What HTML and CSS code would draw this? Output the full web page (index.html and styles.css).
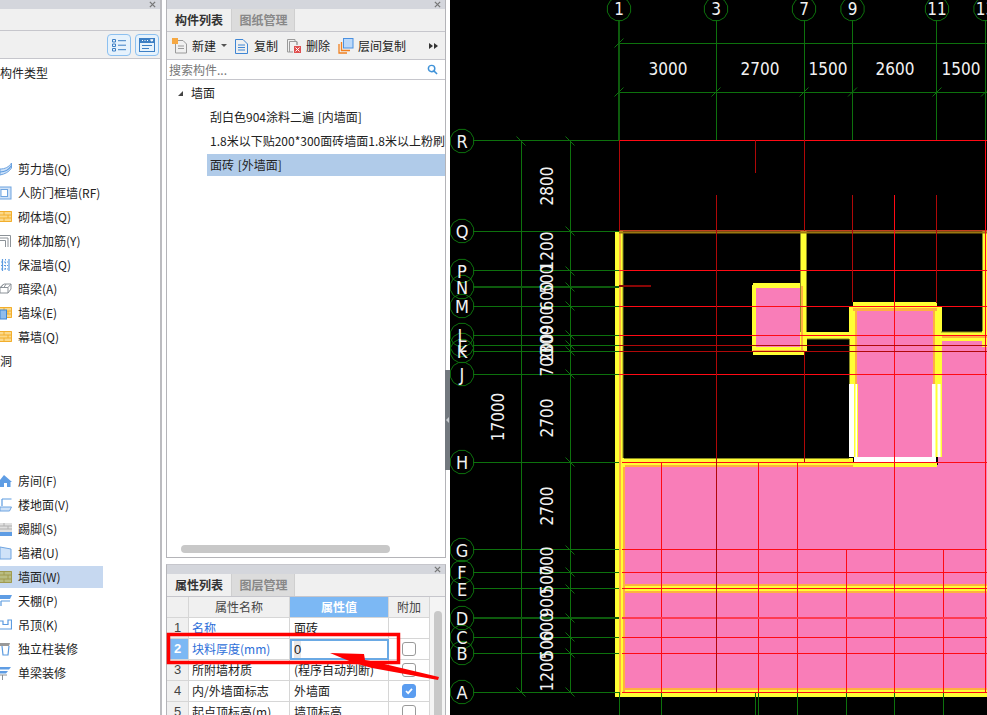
FILE: index.html
```html
<!DOCTYPE html>
<html lang="zh">
<head>
<meta charset="utf-8">
<title>墙面</title>
<link rel="stylesheet" href="styles.css">
</head>
<body>
<svg class="defs" width="0" height="0" aria-hidden="true">
  <defs>
    <g id="brick">
      <rect x="0" y="1" width="12" height="11" class="b-fill"/>
      <path d="M0 1.500H11.500V11.500H0M0 5H11.500M0 8H11.500M4 1.500V5M8 5V8M4 8V11.500" class="b-line"/>
    </g>
    <polygon id="bub" points="11.6,3.1 8.5,8.5 3.1,11.6 -3.1,11.6 -8.5,8.5 -11.6,3.1 -11.6,-3.1 -8.5,-8.5 -3.1,-11.6 3.1,-11.6 8.5,-8.5 11.6,-3.1"/>
  </defs>
</svg>
<div class="app">
  <aside class="left">
    <div class="titlebar"><svg class="close" viewBox="0 0 8 8"><path d="M1 1L7 7M7 1L1 7"/></svg></div>
    <div class="left-bar"></div>
    <div class="left-tools">
      <button class="view-btn"><svg viewBox="0 0 16 14"><path class="ib" d="M1.500 1.500h3v2.500h-3zM1.500 6h3v2.500h-3zM1.500 10.500h3v2.500h-3zM7 2.700h8M7 7.200h8M7 11.700h8"/></svg></button>
      <button class="view-btn"><svg viewBox="0 0 16 14"><rect class="ib" x="0.5" y="0.5" width="15" height="13"/><rect class="if" x="0.5" y="0.5" width="15" height="4"/><path class="ib" d="M3 7.500h10M3 10.500h7"/><path class="iw" d="M3 2.500h1M5.500 2.500h1M8 2.500h1M11.500 1.800h2.500l-1.200 1.500z"/></svg></button>
    </div>
    <div class="tree">
      <div class="row"><span>构件类型</span></div>
      <div class="tree-gap-a"></div>
      <div class="row"><svg class="ic" viewBox="0 0 12 14"><path class="ic-l" d="M0 7C5 7 9 5 11.500 1V6C9 10 5 12 0 13Z"/><path class="ic-s" d="M0 10C5 10 9 7.500 11.500 3.500"/></svg><span>剪力墙(Q)</span></div>
      <div class="row"><svg class="ic" viewBox="0 0 12 14"><rect class="ic-l" x="-2" y="1" width="13" height="12"/><rect class="ic-w" x="1" y="3.500" width="6.500" height="7"/></svg><span>人防门框墙(RF)</span></div>
      <div class="row"><svg class="ic" viewBox="0 0 12 14"><use href="#brick"/></svg><span>砌体墙(Q)</span></div>
      <div class="row"><svg class="ic" viewBox="0 0 12 14"><path class="ic-g" d="M0 1.500H10.500V13M0 4H8V13M0 6.500H5.500V13"/></svg><span>砌体加筋(Y)</span></div>
      <div class="row"><svg class="ic" viewBox="0 0 12 14"><path class="ic-s" d="M2.500 1V13M9 1V13"/><path class="ic-d" d="M5.500 1V13M1 4H8M1 7.500H8M1 11H8"/></svg><span>保温墙(Q)</span></div>
      <div class="row"><svg class="ic" viewBox="0 0 12 14"><path class="ic-g" d="M0 5.500L4 2H11V7L8 11H0ZM0 5.500H8V11M8 5.500L11 2M3 2.500L1 5.500M6 2L4 5.500"/></svg><span>暗梁(A)</span></div>
      <div class="row"><svg class="ic" viewBox="0 0 12 14"><use href="#brick"/><rect class="ic-l2" x="0" y="4" width="6.500" height="9"/></svg><span>墙垛(E)</span></div>
      <div class="row"><svg class="ic" viewBox="0 0 12 14"><use href="#brick"/></svg><span>幕墙(Q)</span></div>
      <div class="row row-nk"><span>洞</span></div>
      <div class="tree-gap-b"></div>
      <div class="row"><svg class="ic" viewBox="0 0 12 14"><path class="ic-h" d="M0 6L4 1L12 8H10.500V13H7V9H4V13H0Z"/></svg><span>房间(F)</span></div>
      <div class="row"><svg class="ic" viewBox="0 0 12 14"><path class="ic-s" d="M2 1H11.500M2 1V8"/><path class="ic-l" d="M0 9H11.500L9.500 13H0Z"/></svg><span>楼地面(V)</span></div>
      <div class="row"><svg class="ic" viewBox="0 0 12 14"><rect class="gb" x="0" y="1" width="12" height="9"/><path class="gl" d="M0 4H12M0 7H12M4 1V4M8 4V7"/><rect class="ic-h" x="0" y="10" width="12" height="4"/></svg><span>踢脚(S)</span></div>
      <div class="row"><svg class="ic" viewBox="0 0 12 14"><path class="ic-l" d="M0 1L11 3V13H0Z"/></svg><span>墙裙(U)</span></div>
      <div class="row sel"><svg class="ic" viewBox="0 0 12 14"><rect x="0" y="1" width="12" height="12" class="o-fill"/><path d="M0 1.500H11.500V12.500H0M0 5H11.500M0 9H11.500M4 1.500V5M8 5V9M4 9V12.500" class="o-line"/></svg><span>墙面(W)</span></div>
      <div class="row"><svg class="ic" viewBox="0 0 12 14"><path class="ic-h" d="M0 1H12L10 5H0Z"/><path class="ic-s" d="M1 7H10M1 7V12"/></svg><span>天棚(P)</span></div>
      <div class="row"><svg class="ic" viewBox="0 0 12 14"><path class="ic-s" d="M0 3H3V6.500H8V2H11.500V11H0"/></svg><span>吊顶(K)</span></div>
      <div class="row"><svg class="ic" viewBox="0 0 12 14"><path class="gb2" d="M0 1H10L9 4H0Z"/><path class="ic-s" d="M2 4L3 13H8L9 4"/></svg><span>独立柱装修</span></div>
      <div class="row"><svg class="ic" viewBox="0 0 12 14"><path class="ic-h" d="M0 1H11L9 3.500H0ZM0 5H8L6 7.500H0Z"/><path class="ic-g" d="M0 9H7M2.500 9V14"/></svg><span>单梁装修</span></div>
    </div>
  </aside>

  <section class="mid">
    <div class="panel list-panel">
      <div class="titlebar"><svg class="close" viewBox="0 0 8 8"><path d="M1 1L7 7M7 1L1 7"/></svg></div>
      <div class="tabs">
        <div class="tab on">构件列表</div>
        <div class="tab">图纸管理</div>
      </div>
      <div class="toolbar">
        <svg class="tool t-new" viewBox="0 0 16 16"><path class="d" d="M3.500 2.500H11L14.500 6V15H3.500Z"/><path class="d" d="M6 8H12M6 10.500H12"/><rect class="star" x="0" y="0" width="6" height="6"/></svg>
        <span class="t-label">新建</span>
        <i class="caret"></i>
        <svg class="tool t-copy" viewBox="0 0 16 16"><path class="b" d="M1.500 1.500H9L13.500 6V15.500H1.500Z"/><path class="b" d="M4 7H11M4 9.500H11M4 12H11"/></svg>
        <span class="t-label">复制</span>
        <svg class="tool t-del" viewBox="0 0 16 16"><path class="g" d="M1.500 1.500H9V4M11 4V7M1.500 1.500V14H7M3.500 3.500H11V7M3.500 3.500V14"/><rect class="x" x="8" y="8" width="7" height="7"/><path class="xw" d="M9.500 9.500L13.500 13.500M13.500 9.500L9.500 13.500"/></svg>
        <span class="t-label">删除</span>
        <svg class="tool t-floor" viewBox="0 0 16 16"><path class="or" d="M1 6V15H9M3.500 4V12.500H12"/><rect class="bl" x="5.500" y="0.500" width="9.500" height="9.500"/></svg>
        <span class="t-label">层间复制</span>
        <span class="more"><i></i><i></i></span>
      </div>
      <div class="search">
        <span>搜索构件...</span>
        <svg viewBox="0 0 12 12"><circle cx="5" cy="5" r="3.500"/><path d="M7.500 7.500L11 11"/></svg>
      </div>
      <div class="items">
        <div class="item-root"><i class="tri"></i><span>墙面</span></div>
        <div class="item">刮白色904涂料二遍 [内墙面]</div>
        <div class="item">1.8米以下贴200*300面砖墙面1.8米以上粉刷白色涂料</div>
        <div class="item active">面砖 [外墙面]</div>
      </div>
      <div class="hscroll"><div class="hthumb"></div></div>
    </div>

    <div class="panel prop-panel">
      <div class="titlebar"><svg class="close" viewBox="0 0 8 8"><path d="M1 1L7 7M7 1L1 7"/></svg></div>
      <div class="tabs">
        <div class="tab on">属性列表</div>
        <div class="tab">图层管理</div>
      </div>
      <div class="grid-wrap">
        <div class="grid">
          <div class="gr head"><div class="c n"></div><div class="c name">属性名称</div><div class="c val hl">属性值</div><div class="c add">附加</div></div>
          <div class="gr"><div class="c n">1</div><div class="c name link">名称</div><div class="c val">面砖</div><div class="c add"></div></div>
          <div class="gr"><div class="c n hl">2</div><div class="c name link">块料厚度(mm)</div><div class="c val edit"><span class="caretbox">0</span></div><div class="c add"><i class="cb"></i></div></div>
          <div class="gr"><div class="c n">3</div><div class="c name">所附墙材质</div><div class="c val">(程序自动判断)</div><div class="c add"><i class="cb"></i></div></div>
          <div class="gr"><div class="c n">4</div><div class="c name">内/外墙面标志</div><div class="c val">外墙面</div><div class="c add"><i class="cb on"><svg viewBox="0 0 14 14"><path d="M3.500 7L6 9.500L10.500 4.500"/></svg></i></div></div>
          <div class="gr"><div class="c n">5</div><div class="c name">起点顶标高(m)</div><div class="c val">墙顶标高</div><div class="c add"><i class="cb"></i></div></div>
        </div>
        <div class="vscroll"><div class="vthumb"></div></div>
      </div>
    </div>
  </section>

  <div class="splitter"><div class="grip"><i></i></div></div>

  <svg class="cad" width="537" height="715" viewBox="450 0 537 715">
    <rect class="bg" x="450" y="0" width="537" height="715"/>
    <!-- pink fills -->
    <path class="pink" d="M622 465H987V692H622ZM755 286H802V350H755ZM855 308H936V465H855ZM938 338H987V465H938Z"/>
    <!-- walls -->
    <path class="yel" d="M615 231H623V697H615ZM800 231H807V333H800ZM982 231H987V347H982ZM753 283H804V288H753ZM752 285H756V352H752ZM753 347H804V355H753ZM800 288H807V351H800ZM807 332H852V339H807ZM849 306H857V384H849ZM853 302H937V311H853ZM933 307H942V384H933ZM941 332H987V341H941ZM619 458H853V467H619ZM624 584H987V593H624ZM615 688H987V697H615Z"/>
    <path class="wht" d="M849 384H858V457H849ZM854 457H936V463H854ZM932 384H942V457H932Z"/>
    <path class="yel" d="M854 384H855.500V457H854ZM857 384H858V457H857ZM853 463H937V467H853ZM935.500 384H937.500V457H935.500ZM940.500 384H942V457H940.500Z"/>
    <path class="org" d="M619 233H621V695H619ZM623 465H625V692H623ZM801 286H803V352H801ZM753 350H804V352H753ZM805 335H851V336H805ZM855 308H857V384H855ZM933 308H935V384H933ZM853 308H937V311H853ZM942 336V338H987V336ZM624 584H987V586H624ZM624 591H987V593H624ZM623 688H987V690H623ZM623 465V467H853V465Z"/>
    <path class="olive" d="M800 231H801V332H800ZM806 231H807V332H806ZM622.500 233H623.500V458H622.500ZM807 338.500H849V339.500H807ZM624 458H849V459H624ZM941 331.500H982V332.500H941ZM982 231H983V331H982ZM849 339H850V384H849Z"/>
    <!-- Q line -->
    <rect class="qa" x="619" y="230" width="368" height="1.500"/>
    <rect class="qb" x="619" y="231.500" width="368" height="2"/>
    <!-- green -->
    <path class="gr1" d="M716.500 20V140M804.500 20V140M852.500 20V140M936.500 20V140M985.500 20V140M619 43.500H987M619 92.500H987M473 140.500H619M473 231.500H619M473 270.500H619M473 306.500H619M473 335.500H619M473 345.500H619M473 351.500H619M473 374.500H619M473 462.500H619M473 549.500H619M473 572.500H619M473 588.500H619M473 637.500H619M473 653.500H619M473 692.500H619M521.500 140V692M570.500 140V692M619.500 692V715M661.500 692V715M755.500 692V715M758.500 692V715M797.500 692V715M846.500 692V715M894.500 692V715M943.500 692V715"/>
    <path class="gr-n" d="M619 20V140M473 287H619M473 618H619"/>
    <path class="gr2" d="M614.500 47.500L623.500 38.500M614.500 96.500L623.500 87.500M711.500 96.500L720.500 87.500M799.500 96.500L808.500 87.500M848 96.500L857 87.500M932.500 96.500L941.500 87.500M981 96.500L987 90.500M516.500 136.500L525.500 145.500M565.500 136.500L574.500 145.500M565.500 226.500L574.500 235.500M565.500 266.500L574.500 275.500M565.500 282.500L574.500 291.500M565.500 301.500L574.500 310.500M565.500 330.500L574.500 339.500M565.500 340.500L574.500 349.500M565.500 346.500L574.500 355.500M565.500 369.500L574.500 378.500M565.500 457.500L574.500 466.500M565.500 545.500L574.500 554.500M565.500 567.500L574.500 576.500M565.500 584.500L574.500 593.500M565.500 613.500L574.500 622.500M565.500 632.500L574.500 641.500M565.500 648.500L574.500 657.500M565.500 687.500L574.500 696.500M516.500 687.500L525.500 696.500"/>
    <!-- red -->
    <path class="red" d="M619 140.500H987M619 270.500H987M619 306.500H987M619 335.500H987M619 374.500H987M894.500 195V692M985.500 140V692M622 462.500H987M622 549.500H987M622 572.500H987M622 588.500H987M622 637.500H987M622 653.500H987M622 692.500H987M661.500 462V692M758.500 462V692M797.500 462V692M846.500 549V692M943.500 549V692"/>
    <path class="red-m" d="M622 617.500H987"/>
    <path class="red-d" d="M619 140V231M804.500 140V231M755.500 140V173M619 345.500H987M619 351.500H987M716.500 195V692M852.500 195V302M936.500 195V303M804.500 351V462"/>
    <path class="red-t" d="M619 286H651"/>
    <!-- bubbles -->
    <g class="bubbles">
      <use href="#bub" x="619" y="9"/><use href="#bub" x="716" y="9"/><use href="#bub" x="804" y="9"/><use href="#bub" x="852.500" y="9"/><use href="#bub" x="937" y="9"/><use href="#bub" x="985.500" y="9"/>
      <use href="#bub" x="462" y="141"/><use href="#bub" x="462" y="231"/><use href="#bub" x="462" y="271"/><use href="#bub" x="462" y="287"/><use href="#bub" x="462" y="306"/><use href="#bub" x="462" y="335"/><use href="#bub" x="462" y="345"/><use href="#bub" x="462" y="351"/><use href="#bub" x="462" y="374"/><use href="#bub" x="462" y="462"/><use href="#bub" x="462" y="550"/><use href="#bub" x="462" y="572"/><use href="#bub" x="462" y="589"/><use href="#bub" x="462" y="618"/><use href="#bub" x="462" y="637"/><use href="#bub" x="462" y="653"/><use href="#bub" x="462" y="692"/>
    </g>
    <g class="lab">
      <text x="619" y="15">1</text><text x="716" y="15">3</text><text x="804" y="15">7</text><text x="852.500" y="15">9</text><text x="937" y="15">11</text><text x="985.500" y="15">13</text>
      <g class="axis">
        <text x="462" y="147.500">R</text><text x="462" y="237.500">Q</text><text x="462" y="277.500">P</text><text x="462" y="293.500">N</text><text x="462" y="312.500">M</text><text x="462" y="341.500">L</text><text x="462" y="351.500">L</text><text x="462" y="357.500">K</text><text x="462" y="380.500">J</text><text x="462" y="468.500">H</text><text x="462" y="556.500">G</text><text x="462" y="578.500">F</text><text x="462" y="595.500">E</text><text x="462" y="624.500">D</text><text x="462" y="643.500">C</text><text x="462" y="659.500">B</text><text x="462" y="698.500">A</text>
      </g>
      <text x="668" y="75">3000</text><text x="760" y="75">2700</text><text x="828" y="75">1500</text><text x="895" y="75">2600</text><text x="961" y="75">1500</text>
      <text transform="translate(553 186) rotate(-90)">2800</text>
      <text transform="translate(553 251) rotate(-90)">1200</text>
      <text transform="translate(553 279) rotate(-90)">500</text>
      <text transform="translate(553 296) rotate(-90)">600</text>
      <text transform="translate(553 320) rotate(-90)">900</text>
      <text transform="translate(553 340) rotate(-90)">300</text>
      <text transform="translate(553 348) rotate(-90)">200</text>
      <text transform="translate(553 362) rotate(-90)">700</text>
      <text transform="translate(553 418) rotate(-90)">2700</text>
      <text transform="translate(553 506) rotate(-90)">2700</text>
      <text transform="translate(553 561) rotate(-90)">700</text>
      <text transform="translate(553 580) rotate(-90)">500</text>
      <text transform="translate(553 603) rotate(-90)">900</text>
      <text transform="translate(553 627) rotate(-90)">600</text>
      <text transform="translate(553 645) rotate(-90)">500</text>
      <text transform="translate(553 672) rotate(-90)">1200</text>
      <text transform="translate(504 417) rotate(-90)">17000</text>
    </g>
  </svg>

  <svg class="annot" width="987" height="715" viewBox="0 0 987 715">
    <rect class="redbox" x="168.500" y="634.500" width="230" height="28"/>
    <polygon class="arrow" points="330,653 364,654 365,660 376,662 439,677 438,680 372,668 354,663"/>
  </svg>
</div>
</body>
</html>
```
FILE: styles.css
```css
* { box-sizing: border-box; }
html, body { margin: 0; padding: 0; background: #fff; }
body {
  width: 987px;
  height: 715px;
  overflow: hidden;
  font-family: "Noto Sans CJK SC", "Liberation Sans", sans-serif;
  font-size: 12px;
  color: #222;
}
.defs { position: absolute; }
.app { position: relative; display: flex; width: 987px; height: 715px; overflow: hidden; }

/* shared */
.titlebar { height: 9px; background: #d4d6dc; display: flex; justify-content: flex-end; align-items: flex-start; flex: none; }
.close { width: 7px; height: 7px; margin: 1px 4px 0 0; }
.close path { stroke: #777; stroke-width: 1.5; fill: none; }

/* left */
.left { width: 162px; flex: none; border-right: 2px solid #bcbcc0; display: flex; flex-direction: column; height: 715px; }
.left-bar { height: 22px; background: #f0f0f0; border-bottom: 1px solid #c6c6cc; flex: none; }
.left-tools { height: 28px; background: #f0f0f0; border-bottom: 1px solid #c6c6cc; display: flex; justify-content: flex-end; align-items: center; gap: 4px; padding-right: 1px; flex: none; }
.view-btn { width: 24px; height: 22px; padding: 0; border: 1px solid #8cc0f0; border-radius: 4px; background: #e6f2fc; display: flex; align-items: center; justify-content: center; }
.view-btn svg { width: 16px; height: 14px; }
.ib { fill: none; stroke: #3d7fc4; stroke-width: 1; }
.if { fill: #3d7fc4; stroke: #3d7fc4; }
.iw { fill: #fff; stroke: #fff; stroke-width: 1; }
.tree { padding-top: 3px; display: flex; flex-direction: column; gap: 2px; }
.row { width: 103px; height: 22px; line-height: 22px; display: flex; align-items: center; gap: 6px; white-space: nowrap; flex: none; }
.row.sel { background: #c6d8f0; }
.tree-gap-a { height: 70px; flex: none; }
.tree-gap-b { height: 94px; flex: none; }
.ic { width: 12px; height: 14px; flex: none; overflow: hidden; }
.b-fill { fill: #fbd98a; }
.b-line { fill: none; stroke: #f2ae2c; stroke-width: 1; }
.o-fill { fill: #b9bd83; }
.o-line { fill: none; stroke: #a09a4e; stroke-width: 1; }
.ic-l { fill: #cfe2f8; stroke: #6ea4e0; stroke-width: 1; }
.ic-l2 { fill: #8fbcec; stroke: #3f86d4; stroke-width: 1; }
.ic-w { fill: #fff; stroke: #6ea4e0; stroke-width: 1; }
.ic-s { fill: none; stroke: #5c9be0; stroke-width: 1.2; }
.ic-d { fill: none; stroke: #5c9be0; stroke-width: 1; stroke-dasharray: 1.500 1.500; }
.ic-g { fill: none; stroke: #8c9298; stroke-width: 1; }
.ic-h { fill: #5f9de4; }
.gb { fill: #e0e0e0; }
.gb2 { fill: #999; }
.gl { fill: none; stroke: #b0b0b0; stroke-width: 1; }

/* middle */
.mid { width: 280px; margin-left: 4px; flex: none; display: flex; flex-direction: column; gap: 6px; height: 715px; }
.panel { border-left: 1px solid #b4b4b8; border-right: 1px solid #b4b4b8; display: flex; flex-direction: column; }
.list-panel { height: 558px; border-bottom: 1px solid #b4b4b8; flex: none; }
.prop-panel { flex: 1; min-height: 0; overflow: hidden; border-top: 1px solid #c6c6cc; }
.tabs { height: 23px; background: #f0f0f0; border-bottom: 1px solid #c6c6cc; display: flex; flex: none; }
.tab { width: 64px; height: 22px; line-height: 22px; text-align: center; font-weight: 700; color: #888; background: #dcdcdc; border-left: 1px solid #cfcfcf; border-right: 1px solid #cfcfcf; padding-left: 1px; }
.tab.on { color: #333; background: #f0f0f0; border: 0; padding-left: 0; }
.toolbar { height: 28px; background: #f0f0f0; border-bottom: 1px solid #c6c6cc; display: flex; align-items: center; padding-left: 5px; flex: none; position: relative; }
.tool { width: 16px; height: 16px; flex: none; }
.t-label { margin-left: 4px; white-space: nowrap; }
.caret { width: 0; height: 0; border-left: 3px solid transparent; border-right: 3px solid transparent; border-top: 3px solid #555; margin: 0 7px 0 5px; }
.t-del { margin-left: 8px; }
.t-floor { margin-left: 8px; }
.d, .g { fill: none; stroke: #9a9a9a; stroke-width: 1; }
.b { fill: none; stroke: #3f86d4; stroke-width: 1; }
.star { fill: #f6a842; }
.x { fill: #e05050; }
.xw { stroke: #fff; stroke-width: 1; }
.or { fill: none; stroke: #f08020; stroke-width: 1.3; }
.bl { fill: #bcd9fa; stroke: #4a90e0; stroke-width: 1; }
.more { margin-left: auto; margin-right: 7px; display: flex; gap: 1px; }
.more i { width: 0; height: 0; border-left: 4px solid #333; border-top: 3.500px solid transparent; border-bottom: 3.500px solid transparent; }
.search { height: 20px; background: #fff; border-bottom: 1px solid #c6c6cc; display: flex; align-items: center; justify-content: space-between; padding: 0 7px 0 2px; color: #777; line-height: 19px; flex: none; }
.search svg { width: 11px; height: 11px; }
.search circle, .search path { fill: none; stroke: #3f92d8; stroke-width: 1.600; }
.items { flex: 1; min-height: 0; padding-top: 2px; overflow: hidden; display: flex; flex-direction: column; gap: 2px; }
.item-root { height: 22px; line-height: 22px; display: flex; align-items: center; padding-left: 11px; gap: 8px; flex: none; }
.tri { width: 0; height: 0; border-left: 5px solid transparent; border-bottom: 5px solid #444; }
.item { height: 22px; line-height: 22px; margin-left: 40px; padding-left: 3px; white-space: nowrap; overflow: hidden; flex: none; word-spacing: 1px; }
.item.active { background: #b0cbe9; }
.hscroll { height: 12px; padding: 0 55px 0 14px; flex: none; }
.hthumb { height: 8px; background: #c8c8c8; border-radius: 4px; }

.grid-wrap { display: flex; flex: 1; min-height: 0; }
.grid { width: 263px; flex: none; }
.gr { display: grid; grid-template-columns: 22px 101px 99px 41px; height: 21px; }
.c { height: 21px; line-height: 20px; border-right: 1px solid #d6d6d6; border-bottom: 1px solid #d6d6d6; padding-left: 3px; white-space: nowrap; overflow: hidden; }
.n { background: #f0f0f0; text-align: center; padding-left: 0; font-size: 13px; color: #444; font-family: "Liberation Sans", sans-serif; }
.head .c { text-align: center; padding-left: 0; background: #f0f0f0; color: #444; }
.head .val.hl, .c.hl { background: #7cb8f4; color: #fff; font-weight: 700; }
.link { color: #2e6fd9; }
.val { padding-left: 4px; }
.add { display: flex; align-items: center; justify-content: center; padding: 0; }
.edit { border: 2px solid #6aa9e4; padding-left: 2px; font-family: "Liberation Sans", sans-serif; font-size: 13px; line-height: 17px; }
.caretbox { background: #e8e8e8; display: inline-block; }
.cb { width: 14px; height: 14px; border: 1px solid #9a9a9a; border-radius: 3px; display: block; background: #fff; }
.cb.on { background: #5b9df0; border-color: #5b9df0; }
.cb svg { display: block; width: 12px; height: 12px; }
.cb path { fill: none; stroke: #fff; stroke-width: 2; }
.vscroll { width: 15px; flex: 1; padding: 14px 3px 0 4px; background: #f4f4f4; }
.vthumb { height: 130px; width: 8px; background: #c8c8c8; border-radius: 4px; }

/* splitter */
.splitter { width: 5px; margin-left: -1px; flex: none; display: flex; align-items: flex-start; position: relative; }
.grip { width: 5px; height: 100px; margin-top: 370px; background: #72787e; display: flex; align-items: center; justify-content: center; }
.grip i { width: 0; height: 0; border-right: 3px solid #c8ccd0; border-top: 3px solid transparent; border-bottom: 3px solid transparent; }

/* canvas */
.cad { flex: none; display: block; }
.bg { fill: #000; }
.pink { fill: #f97db8; }
.yel { fill: #ffff33; }
.wht { fill: #fff; }
.org { fill: #ffb040; }
.olive { fill: #8c8c20; }
.qa { fill: #c04020; }
.qb { fill: #9a7810; }
.gr1, .gr2 { fill: none; stroke: #0d710d; stroke-width: 1; shape-rendering: crispEdges; }
.gr2 { shape-rendering: auto; }
.gr-n { fill: none; stroke: #0d5a0d; stroke-width: 2; shape-rendering: crispEdges; }
.red { fill: none; stroke: #ff0a14; stroke-width: 1; shape-rendering: crispEdges; }
.red-m { fill: none; stroke: #ff3a50; stroke-width: 2; shape-rendering: crispEdges; }
.red-d { fill: none; stroke: #b00808; stroke-width: 1; shape-rendering: crispEdges; }
.red-t { fill: none; stroke: #8a0606; stroke-width: 2; shape-rendering: crispEdges; }
.bubbles use { fill: none; stroke: #0d710d; stroke-width: 1; }
.lab text { fill: #f2f2f2; font-family: "DejaVu Sans Condensed", "DejaVu Sans", sans-serif; font-stretch: condensed; font-size: 17px; text-anchor: middle; }
.lab .axis text { font-size: 18px; }

/* annotation */
.annot { position: absolute; left: 0; top: 0; pointer-events: none; }
.redbox { fill: none; stroke: #f00; stroke-width: 3.500; }
.arrow { fill: #f00; }
```
